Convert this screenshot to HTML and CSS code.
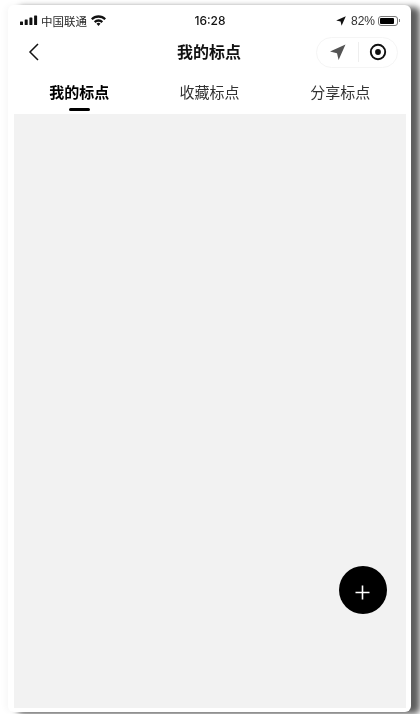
FILE: index.html
```html
<!DOCTYPE html>
<html lang="zh-CN">
<head>
    <meta charset="UTF-8">
    <meta name="viewport" content="width=device-width, initial-scale=1.0">
    <title>我的标点</title>
    <link rel="stylesheet" href="styles.css">
</head>
<body>
    <div class="phone">
        <div class="status-bar">
            <div class="status-left">
                <svg class="signal" width="18" height="11" viewBox="0 0 18 11">
                    <rect x="0" y="6.5" width="3" height="3.5" rx="0.6"/>
                    <rect x="4.7" y="4.5" width="3" height="5.5" rx="0.6"/>
                    <rect x="9.4" y="2.5" width="3" height="7.5" rx="0.6"/>
                    <rect x="14.1" y="0.5" width="3" height="9.5" rx="0.6"/>
                </svg>
                <span class="carrier">中国联通</span>
                <svg class="wifi" width="15" height="11" viewBox="0 0 15 11">
                    <path d="M0 3.4 A10.6 10.6 0 0 1 15 3.4 L13.4 5.1 A8.3 8.3 0 0 0 1.6 5.1 Z"/>
                    <path d="M2.9 6.2 A6.5 6.5 0 0 1 12.1 6.2 L10.5 7.9 A4.2 4.2 0 0 0 4.5 7.9 Z"/>
                    <path d="M5.5 8.8 A2.8 2.8 0 0 1 9.5 8.8 L7.5 11 Z"/>
                </svg>
            </div>
            <div class="status-time">16:28</div>
            <div class="status-right">
                <svg class="location" width="10" height="10" viewBox="0 0 10 10"><path d="M9.8 0.2 L0.2 4.4 L4.6 5.4 L5.6 9.8 Z"/></svg>
                <span class="battery-pct">82%</span>
                <div class="battery">
                    <div class="battery-body"><div class="battery-fill"></div></div>
                    <div class="battery-cap"></div>
                </div>
            </div>
        </div>

        <div class="nav-bar">
            <svg class="back" width="12" height="18" viewBox="0 0 12 18">
                <path d="M10 1 L2 9 L10 17" fill="none" stroke="#111" stroke-width="1.5"/>
            </svg>
            <div class="nav-title">我的标点</div>
            <div class="capsule">
                <svg width="18" height="18" viewBox="0 0 18 18"><path d="M16.5 1.5 L1 8.6 L8 10.2 L9.6 17 Z" fill="#555"/></svg>
                <div class="capsule-line"></div>
                <svg width="18" height="18" viewBox="0 0 18 18">
                    <circle cx="9" cy="9" r="7.2" fill="none" stroke="#111" stroke-width="1.9"/>
                    <circle cx="9" cy="9" r="2.9" fill="#111"/>
                </svg>
            </div>
        </div>

        <div class="tabs">
            <div class="tab active">我的标点</div>
            <div class="tab">收藏标点</div>
            <div class="tab">分享标点</div>
        </div>

        <div class="list"></div>

        <div class="add-btn">
            <svg width="15" height="15" viewBox="0 0 15 15">
                <path d="M7.5 0.5 V14.5 M0.5 7.5 H14.5" stroke="#fff" stroke-width="1.6"/>
            </svg>
        </div>
    </div>
</body>
</html>
```

FILE: styles.css
```css
html, body {
    margin: 0;
    padding: 0;
    height: 714px;
    overflow: hidden;
    background-color: rgb(255, 255, 255);
}
body {
    padding: 5px 9px 2px 8px;
    box-sizing: border-box;
    font-family: "Noto Sans CJK SC", "Liberation Sans", sans-serif;
    color: rgb(17, 17, 17);
}
.phone {
    position: relative;
    display: flex;
    flex-direction: column;
    height: 100%;
    padding: 0 5px 4px 6px;
    box-sizing: border-box;
    background-color: rgb(255, 255, 255);
    border-radius: 6px;
    box-shadow: 9px 2px 6px rgba(40, 40, 40, 0.75), -3px 0 6px rgba(0, 0, 0, 0.03);
    filter: blur(0.35px);
}
.status-bar {
    display: grid;
    grid-template-columns: 1fr auto 1fr;
    align-items: center;
    height: 31px;
    padding: 0 6px 0 6px;
    flex-shrink: 0;
}
.status-left {
    display: flex;
    align-items: center;
    gap: 3px;
}
.status-left svg, .status-right svg {
    fill: rgb(17, 17, 17);
}
.carrier {
    font-size: 11.5px;
    color: rgb(40, 40, 40);
}
.wifi {
    margin-left: 1px;
}
.status-time {
    font-family: Inter, "Liberation Sans", sans-serif;
    font-size: 12px;
    font-weight: 500;
}
.status-right {
    display: flex;
    align-items: center;
    justify-content: flex-end;
    gap: 3px;
}
.location {
    margin-right: 2px;
}
.battery-pct {
    font-family: "Liberation Sans", sans-serif;
    font-size: 12px;
    color: rgb(50, 50, 50);
}
.battery {
    display: flex;
    align-items: center;
    gap: 1px;
}
.battery-body {
    width: 20px;
    height: 10px;
    padding: 1px;
    box-sizing: border-box;
    border: 1px solid rgb(120, 120, 120);
    border-radius: 3px;
}
.battery-fill {
    width: 85%;
    height: 100%;
    background-color: rgb(0, 0, 0);
    border-radius: 1px;
}
.battery-cap {
    width: 1px;
    height: 3px;
    background-color: rgb(130, 130, 130);
}
.nav-bar {
    position: relative;
    display: flex;
    align-items: center;
    justify-content: space-between;
    height: 32px;
    padding: 0 8px 0 14px;
    flex-shrink: 0;
}
.nav-title {
    position: absolute;
    left: 0;
    right: 0;
    margin-top: -2px;
    padding-right: 2px;
    text-align: center;
    font-size: 16px;
    font-weight: 700;
}
.capsule {
    position: relative;
    display: flex;
    align-items: center;
    justify-content: space-between;
    width: 82px;
    height: 31px;
    padding: 0 10px 0 12px;
    box-sizing: border-box;
    border: 1px solid rgb(245, 245, 245);
    border-radius: 16px;
}
.capsule-line {
    width: 1px;
    height: 20px;
    background-color: rgb(238, 238, 238);
}
.tabs {
    display: grid;
    grid-template-columns: repeat(3, 1fr);
    height: 46px;
    flex-shrink: 0;
}
.tab {
    position: relative;
    padding: 12px 1px 0 0;
    text-align: center;
    font-size: 15px;
    line-height: 24px;
    color: rgb(50, 50, 50);
}
.tab.active {
    padding-right: 0;
    font-weight: 700;
    color: rgb(0, 0, 0);
}
.tab.active::after {
    content: "";
    position: absolute;
    left: 50%;
    bottom: 3px;
    width: 21px;
    height: 3px;
    margin-left: -10px;
    border-radius: 2px;
    background-color: rgb(0, 0, 0);
}
.list {
    flex: 1;
    background-color: rgb(242, 242, 242);
}
.add-btn {
    position: absolute;
    right: 24px;
    bottom: 98px;
    display: flex;
    align-items: center;
    justify-content: center;
    width: 48px;
    height: 48px;
    border-radius: 50%;
    background-color: rgb(0, 0, 0);
}
.add-btn svg {
    margin: 4px 1px 0 0;
}
```
